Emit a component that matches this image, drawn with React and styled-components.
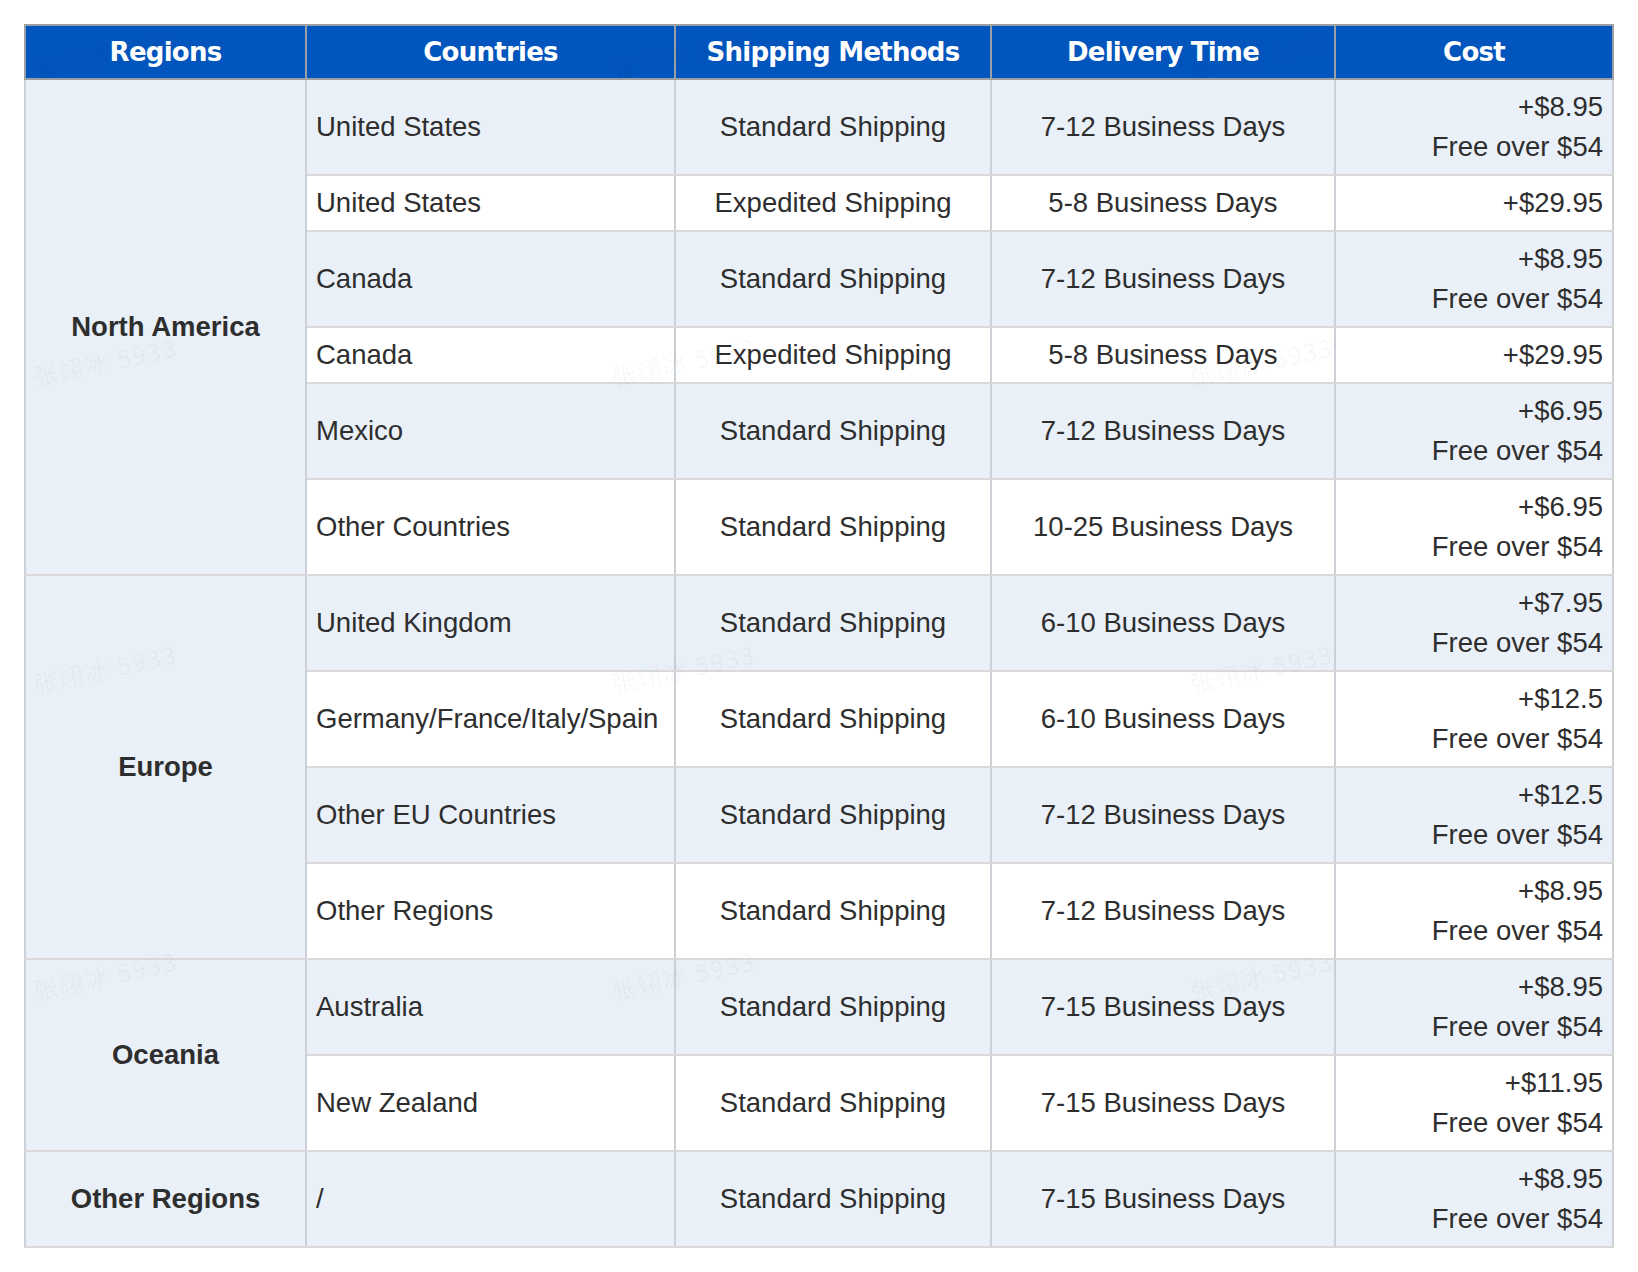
import React from "react";
import styled, { createGlobalStyle } from "styled-components";

const GlobalStyle = createGlobalStyle`
  html, body {
    margin: 0;
    padding: 0;
    background: #ffffff;
  }

  body {
    font-family: "Liberation Sans", Arial, sans-serif;
  }
`;

const Page = styled.div`
  position: relative;
  overflow: hidden;
  padding: 24px 24px;
`;

const Table = styled.table`
  width: 1588px;
  table-layout: fixed;
  border-collapse: collapse;

  tbody tr:nth-child(odd) {
    background: #eaf0f8;
  }

  tbody tr:nth-child(even) {
    background: #ffffff;
  }
`;

const HeadCell = styled.th`
  background: #0255bd;
  color: #ffffff;
  border: 2px solid #9a9fa5;
  padding: 6px 8px;
  font-family: "DejaVu Sans", Verdana, sans-serif;
  font-weight: bold;
  font-size: 26px;
  letter-spacing: -0.75px;
  line-height: 40px;
  text-align: center;
  white-space: nowrap;
`;

const Cell = styled.td`
  border-left: 2px solid #cbd0d6;
  border-right: 2px solid #cbd0d6;
  border-bottom: 2px solid #d9d9d9;
  padding: 7px 9px;
  font-size: 27.5px;
  line-height: 40px;
  color: #2e2e2e;
  white-space: nowrap;
  vertical-align: middle;
  text-align: ${(p) => p.$align || "left"};
`;

const RegionCell = styled(Cell)`
  background: #eaf0f8;
  font-weight: bold;
  text-align: center;
`;

const CostLine = styled.span`
  display: block;
`;

const Watermarks = styled.div`
  position: absolute;
  top: 26px;
  left: 30px;
  display: grid;
  grid-template-columns: repeat(3, 578px);
  grid-auto-rows: 307px;
  pointer-events: none;
`;

const Mark = styled.span`
  display: block;
  width: max-content;
  font-family: "Noto Sans CJK SC", "Liberation Sans", sans-serif;
  font-size: 24px;
  letter-spacing: 2px;
  color: rgba(0, 0, 0, 0.04);
  transform: rotate(-12deg);
  transform-origin: left top;
  margin-top: 26px;
`;

const FREE = "Free over $54";

const regions = [
  {
    name: "North America",
    rows: [
      ["United States", "Standard Shipping", "7-12 Business Days", ["+$8.95", FREE]],
      ["United States", "Expedited Shipping", "5-8 Business Days", ["+$29.95"]],
      ["Canada", "Standard Shipping", "7-12 Business Days", ["+$8.95", FREE]],
      ["Canada", "Expedited Shipping", "5-8 Business Days", ["+$29.95"]],
      ["Mexico", "Standard Shipping", "7-12 Business Days", ["+$6.95", FREE]],
      ["Other Countries", "Standard Shipping", "10-25 Business Days", ["+$6.95", FREE]],
    ],
  },
  {
    name: "Europe",
    rows: [
      ["United Kingdom", "Standard Shipping", "6-10 Business Days", ["+$7.95", FREE]],
      ["Germany/France/Italy/Spain", "Standard Shipping", "6-10 Business Days", ["+$12.5", FREE]],
      ["Other EU Countries", "Standard Shipping", "7-12 Business Days", ["+$12.5", FREE]],
      ["Other Regions", "Standard Shipping", "7-12 Business Days", ["+$8.95", FREE]],
    ],
  },
  {
    name: "Oceania",
    rows: [
      ["Australia", "Standard Shipping", "7-15 Business Days", ["+$8.95", FREE]],
      ["New Zealand", "Standard Shipping", "7-15 Business Days", ["+$11.95", FREE]],
    ],
  },
  {
    name: "Other Regions",
    rows: [["/", "Standard Shipping", "7-15 Business Days", ["+$8.95", FREE]]],
  },
];

const columns = [
  { title: "Regions", width: 281 },
  { title: "Countries", width: 369 },
  { title: "Shipping Methods", width: 316 },
  { title: "Delivery Time", width: 344 },
  { title: "Cost", width: 278 },
];

const App = () => {
  return (
    <Page>
      <GlobalStyle />
      <Table>
        <colgroup>
          {columns.map((c) => (
            <col key={c.title} style={{ width: c.width }} />
          ))}
        </colgroup>
        <thead>
          <tr>
            {columns.map((c) => (
              <HeadCell key={c.title}>{c.title}</HeadCell>
            ))}
          </tr>
        </thead>
        <tbody>
          {regions.map((region) =>
            region.rows.map(([country, method, time, cost], i) => (
              <tr key={region.name + i}>
                {i === 0 && <RegionCell rowSpan={region.rows.length}>{region.name}</RegionCell>}
                <Cell>{country}</Cell>
                <Cell $align="center">{method}</Cell>
                <Cell $align="center">{time}</Cell>
                <Cell $align="right">
                  {cost.map((line) => (
                    <CostLine key={line}>{line}</CostLine>
                  ))}
                </Cell>
              </tr>
            ))
          )}
        </tbody>
      </Table>
      <Watermarks>
        {Array.from({ length: 12 }).map((_, i) => (
          <Mark key={i}>张翊冰 5933</Mark>
        ))}
      </Watermarks>
    </Page>
  );
};

export default App;
